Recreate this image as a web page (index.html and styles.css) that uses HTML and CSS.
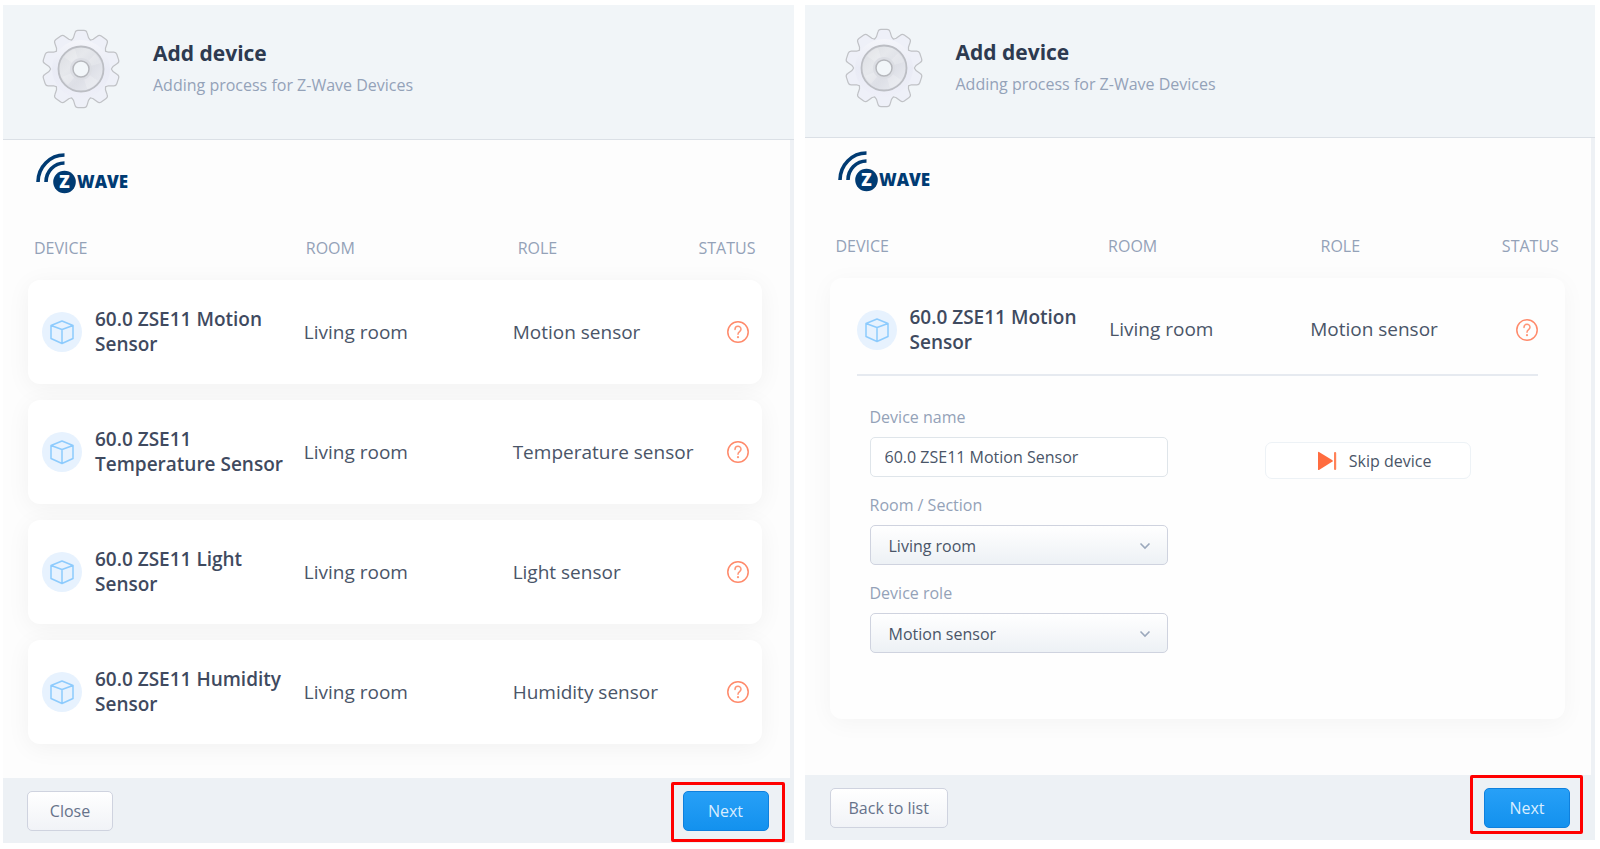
FILE: index.html
```html
<!DOCTYPE html>
<html lang="en">
<head>
<meta charset="UTF-8" />
<meta name="viewport" content="width=device-width, initial-scale=1" />
<title>Add device</title>
<link rel="stylesheet" href="styles.css">
</head>
<body>
  <!-- Shared icons -->
  <svg class="sprite" aria-hidden="true">
    <defs>
      <linearGradient id="gearFill" x1="0" y1="0" x2="0" y2="1">
        <stop offset="0" stop-color="#f4f5fa" />
        <stop offset="0.5" stop-color="#e9ebf5" />
        <stop offset="1" stop-color="#eeeff8" />
      </linearGradient>
      <linearGradient id="gearDisc" x1="0" y1="0" x2="1" y2="1">
        <stop offset="0" stop-color="#d9dbe0" />
        <stop offset="0.35" stop-color="#e6e8ec" />
        <stop offset="0.6" stop-color="#dddfe6" />
        <stop offset="1" stop-color="#eceef3" />
      </linearGradient>
      <path id="tooth" d="M-10 -27 L-7 -31 L-5.500 -36 Q-5 -38 -3 -38 H3 Q5 -38 5.500 -36 L7 -31 L10 -27 Z" />
      <g id="teeth">
        <use href="#tooth" />
        <use href="#tooth" transform="rotate(36)" />
        <use href="#tooth" transform="rotate(72)" />
        <use href="#tooth" transform="rotate(108)" />
        <use href="#tooth" transform="rotate(144)" />
        <use href="#tooth" transform="rotate(180)" />
        <use href="#tooth" transform="rotate(216)" />
        <use href="#tooth" transform="rotate(252)" />
        <use href="#tooth" transform="rotate(288)" />
        <use href="#tooth" transform="rotate(324)" />
        <circle r="29.500" />
      </g>
    </defs>
    <symbol id="gear" viewBox="-40 -40 80 80">
      <use href="#teeth" fill="none" stroke="#c0c2c6" stroke-width="2.400" stroke-linejoin="round" />
      <use href="#teeth" fill="#eef0f8" />
      <circle r="29" fill="url(#gearFill)" />
      <circle r="22.500" fill="url(#gearDisc)" stroke="#bcbec4" stroke-width="1.800" />
      <path d="M0 0 L-17 -12 A21 21 0 0 1 -6 -20 Z M0 0 L17 12 A21 21 0 0 1 6 20 Z M0 0 L20 -6 A21 21 0 0 0 14 -15 Z M0 0 L-19 8 A21 21 0 0 0 -13 16 Z" fill="#fff" opacity="0.2" />
      <circle r="11" fill="#dcdee4" />
      <circle r="8" fill="#f2f6f9" stroke="#b5b7bc" stroke-width="1.500" />
    </symbol>
    <symbol id="cube" viewBox="0 0 40 40">
      <circle cx="20" cy="20" r="20" fill="#e7f2fe" />
      <path d="M20 9 L31 13.500 V26.500 L20 31.500 L9 26.500 V13.500 Z M9 13.500 L20 17.500 L31 13.500 M20 17.500 V31.500" fill="none" stroke="#8dcbfd" stroke-width="1.500" stroke-linejoin="round" />
    </symbol>
    <symbol id="unknown" viewBox="0 0 22 22">
      <circle cx="11" cy="11" r="10.200" fill="none" stroke="#ff8a6b" stroke-width="1.500" />
      <path d="M8 8.500 C8 4.200 14 4.400 14 8.200 C14 10.600 11 10.600 11 13.300" fill="none" stroke="#ff9577" stroke-width="1.500" stroke-linecap="round" />
      <circle cx="11" cy="16.200" r="1.100" fill="#ff9577" />
    </symbol>
    <symbol id="skip" viewBox="0 0 20 20">
      <path d="M1 1.500 Q1 0.500 2 1 L15.500 9.200 Q16.200 10 15.500 10.600 L2 19 Q1 19.400 1 18.500 Z" fill="#ff6c3f" />
      <rect x="17" y="1" width="2.200" height="18" rx="1" fill="#ff8259" />
    </symbol>
  </svg>

  <div class="page">
    <!-- Device list -->
    <section class="panel panel-list">
      <header class="panel-header">
        <svg class="gear"><use href="#gear" /></svg>
        <div>
          <h2>Add device</h2>
          <p class="subtitle">Adding process for Z-Wave Devices</p>
        </div>
      </header>
      <div class="panel-body">
        <svg class="logo" viewBox="0 0 94 42">
          <path d="M3 29 A26.500 27 0 0 1 29.500 2 M11 29 A18.500 19 0 0 1 29.500 10" />
          <circle cx="29.500" cy="29" r="11.300" />
          <text class="logo-z" x="29.500" y="35" text-anchor="middle">Z</text>
          <text class="logo-wave" x="42" y="35">WAVE</text>
        </svg>
        <table class="devices">
          <thead>
            <tr><th>DEVICE</th><th>ROOM</th><th>ROLE</th><th>STATUS</th></tr>
          </thead>
          <tbody class="device-list">
            <tr class="device">
              <td class="name"><svg class="cube"><use href="#cube" /></svg><span>60.0 ZSE11 Motion Sensor</span></td>
              <td>Living room</td>
              <td>Motion sensor</td>
              <td><svg class="status" role="img" aria-label="Unknown"><use href="#unknown" /></svg></td>
            </tr>
            <tr class="device">
              <td class="name"><svg class="cube"><use href="#cube" /></svg><span>60.0 ZSE11 Temperature Sensor</span></td>
              <td>Living room</td>
              <td>Temperature sensor</td>
              <td><svg class="status" role="img" aria-label="Unknown"><use href="#unknown" /></svg></td>
            </tr>
            <tr class="device">
              <td class="name"><svg class="cube"><use href="#cube" /></svg><span>60.0 ZSE11 Light Sensor</span></td>
              <td>Living room</td>
              <td>Light sensor</td>
              <td><svg class="status" role="img" aria-label="Unknown"><use href="#unknown" /></svg></td>
            </tr>
            <tr class="device">
              <td class="name"><svg class="cube"><use href="#cube" /></svg><span>60.0 ZSE11 Humidity Sensor</span></td>
              <td>Living room</td>
              <td>Humidity sensor</td>
              <td><svg class="status" role="img" aria-label="Unknown"><use href="#unknown" /></svg></td>
            </tr>
          </tbody>
        </table>
      </div>
      <footer class="panel-footer">
        <button type="button" class="btn">Close</button>
        <div class="marked">
          <button type="button" class="btn btn-primary">Next</button>
        </div>
      </footer>
    </section>

    <!-- Single device -->
    <section class="panel panel-edit">
      <header class="panel-header">
        <svg class="gear"><use href="#gear" /></svg>
        <div>
          <h2>Add device</h2>
          <p class="subtitle">Adding process for Z-Wave Devices</p>
        </div>
      </header>
      <div class="panel-body">
        <svg class="logo" viewBox="0 0 94 42">
          <path d="M3 29 A26.500 27 0 0 1 29.500 2 M11 29 A18.500 19 0 0 1 29.500 10" />
          <circle cx="29.500" cy="29" r="11.300" />
          <text class="logo-z" x="29.500" y="35" text-anchor="middle">Z</text>
          <text class="logo-wave" x="42" y="35">WAVE</text>
        </svg>
        <table class="devices">
          <thead>
            <tr><th>DEVICE</th><th>ROOM</th><th>ROLE</th><th>STATUS</th></tr>
          </thead>
          <tbody class="device-card">
            <tr class="device-open">
              <td class="name"><svg class="cube"><use href="#cube" /></svg><span>60.0 ZSE11 Motion Sensor</span></td>
              <td>Living room</td>
              <td>Motion sensor</td>
              <td><svg class="status" role="img" aria-label="Unknown"><use href="#unknown" /></svg></td>
            </tr>
            <tr class="device-edit">
              <td colspan="4">
                <form class="edit-form">
                  <div class="fields">
                    <label for="deviceName">Device name</label>
                    <input type="text" id="deviceName" name="deviceName" value="60.0 ZSE11 Motion Sensor" />
                    <label for="room">Room / Section</label>
                    <div class="select">
                      <select id="room" name="room"><option>Living room</option></select>
                      <svg viewBox="0 0 12 8"><path d="M1.500 1.500 L6 6 L10.500 1.500" /></svg>
                    </div>
                    <label for="role">Device role</label>
                    <div class="select">
                      <select id="role" name="role"><option>Motion sensor</option></select>
                      <svg viewBox="0 0 12 8"><path d="M1.500 1.500 L6 6 L10.500 1.500" /></svg>
                    </div>
                  </div>
                  <div class="actions">
                    <button type="button" class="btn-skip"><svg><use href="#skip" /></svg>Skip device</button>
                  </div>
                </form>
              </td>
            </tr>
          </tbody>
        </table>
      </div>
      <footer class="panel-footer">
        <button type="button" class="btn">Back to list</button>
        <div class="marked">
          <button type="button" class="btn btn-primary">Next</button>
        </div>
      </footer>
    </section>
  </div>
</body>
</html>
```
FILE: styles.css
```css
* {
  box-sizing: border-box;
}
body {
  margin: 0;
  font-family: 'Open Sans', 'Noto Sans', sans-serif;
  font-size: 16px;
  line-height: 24px;
  color: #4a5568;
  background: #fff;
}
svg {
  display: block;
  flex: none;
}
.sprite {
  position: absolute;
  width: 0;
  height: 0;
}
.page {
  display: grid;
  grid-template-columns: 1fr 1fr;
  gap: 11px;
  min-height: 100vh;
  padding: 5px 5px 6px 3px;
}

/* Panels */
.panel {
  display: flex;
  flex-direction: column;
  background: #fdfdfd;
}
.panel-edit {
  margin-bottom: 3px;
}
.panel-header {
  display: flex;
  align-items: center;
  gap: 32px;
  height: 135px;
  padding: 0 38px 6px;
  background: #f1f5f8;
  border-bottom: 1px solid #dbe0e6;
}
.panel-edit .panel-header {
  height: 133px;
  padding-left: 39px;
}
.gear {
  width: 80px;
  height: 80px;
}
h2 {
  margin: 0 0 6px;
  font-size: 21px;
  line-height: 28px;
  font-weight: 700;
  color: #2d3a50;
}
.subtitle {
  margin: 0 0 2px;
  color: #94a2b8;
}
.panel-body {
  flex: 1;
  padding: 13px 28px 32px 25px;
  border-right: 4px solid #eef1f5;
}
.panel-edit .panel-body {
  padding-right: 26px;
}
.logo {
  width: 94px;
  height: 42px;
  margin: 0 0 41px 7px;
  overflow: visible;
  fill: #003b73;
}
.logo path {
  fill: none;
  stroke: #003b73;
  stroke-width: 3.6;
}
.logo text {
  font-weight: 800;
  font-size: 17px;
}
.logo .logo-z {
  fill: #fff;
}

/* Device table */
.devices,
.devices thead {
  display: block;
}
.devices th,
.devices td {
  padding: 0;
  text-align: left;
}
.devices thead tr {
  display: grid;
  grid-template-columns: 278fr 212fr 181fr 63fr;
  margin-bottom: 20px;
}
.devices th {
  font-weight: 400;
  color: #94a2b8;
}
.devices th:first-child {
  padding-left: 6px;
}
.device-list {
  display: flex;
  flex-direction: column;
  gap: 16px;
}
.device,
.device-open {
  display: grid;
  align-items: center;
  min-height: 104px;
  font-size: 19px;
  line-height: 25px;
}
.device {
  grid-template-columns: 276fr 209fr 214fr 35fr;
  background: #fff;
  border-radius: 12px;
  box-shadow: 0 4px 24px rgba(0, 0, 0, 0.05);
}
.device .name {
  padding-left: 14px;
}
.name {
  display: flex;
  align-items: center;
  gap: 13px;
  font-weight: 600;
  color: #3f4a5f;
}
.name span {
  max-width: 190px;
}
.cube {
  width: 40px;
  height: 40px;
}
.status {
  width: 22px;
  height: 22px;
}
.device-card {
  display: block;
  min-height: 441px;
  padding: 0 27px;
  background: #fefefe;
  border-radius: 12px;
  box-shadow: 0 4px 24px rgba(0, 0, 0, 0.04);
}
.device-open {
  grid-template-columns: 253fr 201fr 206fr 21fr;
  min-height: 98px;
  padding-top: 7px;
  border-bottom: 2px solid #e6eaf0;
}
.device-edit,
.device-edit td {
  display: block;
}

/* Edit form */
.edit-form {
  display: grid;
  grid-template-columns: 298fr 369fr;
  padding: 29px 0 0 13px;
}
.fields {
  display: flex;
  flex-direction: column;
}
.fields label {
  margin-bottom: 8px;
  color: #94a2b8;
}
.fields input,
.fields select {
  width: 100%;
  height: 40px;
  font: inherit;
  color: #4a5568;
  border-radius: 5px;
  outline: none;
}
.fields input {
  margin-bottom: 16px;
  padding: 0 14px;
  background: #fff;
  border: 1px solid #dfe5ea;
}
.select {
  position: relative;
  margin-bottom: 16px;
}
.fields select {
  display: block;
  padding: 2px 40px 0 18px;
  appearance: none;
  background: linear-gradient(#fff, #edf1f5);
  border: 1px solid #cfd3df;
}
.select svg {
  position: absolute;
  top: 17px;
  right: 17px;
  width: 12px;
  height: 8px;
  fill: none;
  stroke: #9ba8bc;
  stroke-width: 1.6;
  pointer-events: none;
}
.actions {
  padding: 37px 0 0 97px;
}
.btn-skip {
  display: flex;
  align-items: center;
  justify-content: center;
  gap: 12px;
  width: 206px;
  height: 37px;
  padding: 0 0 0 12px;
  font: inherit;
  color: #4a5568;
  background: #fff;
  border: 1px solid #edf2f6;
  border-radius: 7px;
}
.btn-skip svg {
  width: 20px;
  height: 20px;
}

/* Footer */
.panel-footer {
  display: flex;
  justify-content: space-between;
  align-items: flex-start;
  height: 65px;
  padding: 13px 25px 0;
  background: #edf1f5;
}
.panel-list .panel-footer {
  padding: 13px 25px 0 24px;
}
.btn {
  min-width: 86px;
  height: 40px;
  padding: 0 18px;
  font: inherit;
  color: #66728a;
  background: linear-gradient(#fff, #f1f3f7);
  border: 1px solid #cfd3df;
  border-radius: 5px;
}
.btn-primary {
  color: #d9edff;
  background: linear-gradient(#27a0f7, #1391ee);
  border-color: #0f80dd;
}
/* red frame around the button to press */
.marked {
  position: relative;
}
.marked::after {
  content: '';
  position: absolute;
  top: -9px;
  right: -16px;
  bottom: -11px;
  left: -12px;
  border: 3px solid #ff0000;
  border-radius: 2px;
  pointer-events: none;
}
.panel-edit .marked::after {
  top: -13px;
  right: -13px;
  bottom: -6px;
  left: -14px;
}
```
